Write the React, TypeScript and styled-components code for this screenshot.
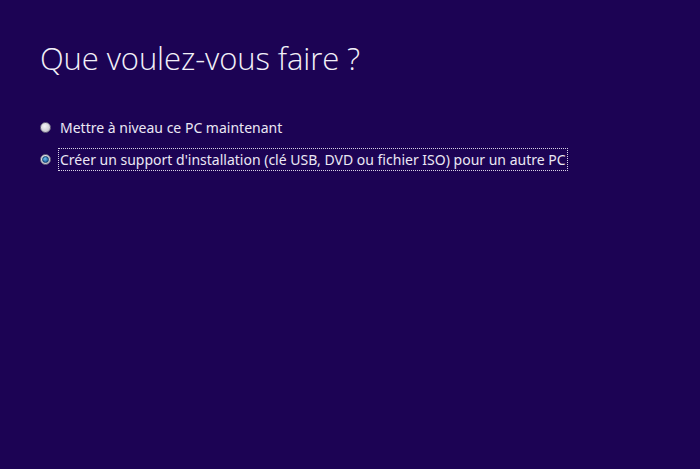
import React from "react";
import styled, { createGlobalStyle } from "styled-components";

const Global = createGlobalStyle`
  html, body { margin: 0; padding: 0; background: #1c0354; }
  body { width: 700px; height: 469px; overflow: hidden; }
`;

const Page = styled.div`
  width: 700px;
  height: 469px;
  background: #1c0354;
  box-sizing: border-box;
  padding: 37px 0 0 40px;
  font-family: "Open Sans", "Noto Sans", sans-serif;
  color: #ffffff;
`;

const Title = styled.h1`
  margin: 0;
  font-weight: 300;
  font-size: 31px;
  line-height: 42px;
  letter-spacing: -0.1px;
  color: #f2f0f8;
`;

const Options = styled.div`
  display: flex;
  flex-direction: column;
  gap: 10px;
  margin-top: 37px;
`;

const Row = styled.label`
  display: flex;
  align-items: center;
  gap: 8px;
  height: 22px;
`;

const Dot = styled.span<{ $checked?: boolean }>`
  width: 11px;
  height: 11px;
  border-radius: 50%;
  box-sizing: border-box;
  flex: none;
  background: radial-gradient(circle at 40% 35%, #f4f4f6, #d2d2d8 60%, #a8a8b2);
  border: 1px solid #6f6a84;
  display: flex;
  align-items: center;
  justify-content: center;
  &::after {
    content: "";
    display: ${(p) => (p.$checked ? "block" : "none")};
    width: 5px;
    height: 5px;
    border-radius: 50%;
    background: radial-gradient(circle at 40% 35%, #6fc0ee, #1a5d9e 80%);
    border: 0.5px solid #123e6e;
  }
`;

const Text = styled.span<{ $focused?: boolean }>`
  font-family: "Noto Sans", "Open Sans", sans-serif;
  font-size: 14px;
  line-height: 21px;
  color: #ebe8f4;
  padding: 0 1px;
  outline: ${(p) => (p.$focused ? "1px dotted #d8d4e6" : "none")};
  outline-offset: 0;
  white-space: nowrap;
`;

export default function App() {
  return (
    <>
      <Global />
      <Page>
        <Title>Que voulez-vous faire ?</Title>
        <Options>
          <Row>
            <Dot />
            <Text>Mettre à niveau ce PC maintenant</Text>
          </Row>
          <Row>
            <Dot $checked />
            <Text $focused>
              Créer un support d'installation (clé USB, DVD ou fichier ISO) pour un autre PC
            </Text>
          </Row>
        </Options>
      </Page>
    </>
  );
}
